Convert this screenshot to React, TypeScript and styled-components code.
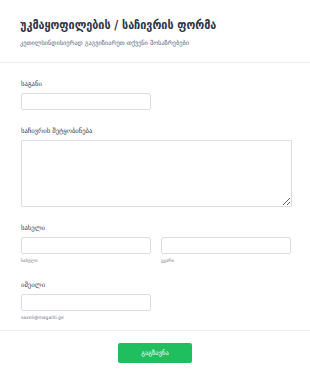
import React from "react";
import styled, { createGlobalStyle } from "styled-components";

const GlobalStyle = createGlobalStyle`
  html, body {
    margin: 0;
    padding: 0;
    background: #ffffff;
  }
  body {
    font-family: "DejaVu Sans", "Noto Sans", sans-serif;
    color: #2c3345;
  }
  * {
    box-sizing: border-box;
  }
`;

const Page = styled.div`
  width: 310px;
  height: 377px;
  background: #ffffff;
  overflow: hidden;
`;

const Header = styled.header`
  padding: 15px 20px 15px;
  border-bottom: 1px solid #ececef;
`;

const Title = styled.h1`
  margin: 0;
  font-family: "DejaVu Sans Condensed", "DejaVu Sans", sans-serif;
  font-size: 12px;
  font-weight: bold;
  line-height: 21px;
  white-space: nowrap;
  color: #2c3345;
`;

const Subtitle = styled.div`
  margin-top: 2px;
  font-size: 6.3px;
  line-height: 9px;
  white-space: nowrap;
  color: #57647e;
`;

const Body = styled.div`
  padding: 16px 20px 9px 21px;
  display: flex;
  flex-direction: column;
  gap: 16px;
`;

const Field = styled.div`
  display: flex;
  flex-direction: column;
`;

const Label = styled.label`
  font-size: 6.6px;
  line-height: 10px;
  color: #2c3345;
  margin-bottom: 4px;
`;

const Row = styled.div`
  display: flex;
  gap: 10px;
`;

const Column = styled.div`
  display: flex;
  flex-direction: column;
`;

const Input = styled.input`
  width: 130px;
  height: 17px;
  margin: 0;
  border: 1px solid #dcdee5;
  border-radius: 2px;
  background: #ffffff;
  padding: 0 4px;
  outline: none;
`;

const TextArea = styled.textarea`
  width: 271px;
  height: 67px;
  border: 1px solid #dcdee5;
  border-radius: 1px;
  background: #ffffff;
  resize: vertical;
  outline: none;
  margin: 0;
  display: block;
`;

const Hint = styled.span`
  margin-top: 3px;
  font-size: 4.5px;
  line-height: 7px;
  color: #6f7689;
`;

const Footer = styled.footer`
  border-top: 1px solid #ececef;
  padding: 12px 0 16px;
  display: flex;
  justify-content: center;
`;

const SubmitButton = styled.button`
  width: 74px;
  height: 20px;
  border: none;
  border-radius: 2px;
  background: #1fbe5e;
  color: #ffffff;
  font-family: "DejaVu Sans", sans-serif;
  font-size: 6.5px;
  cursor: pointer;
`;

export default function App() {
  return (
    <Page>
      <GlobalStyle />
      <Header>
        <Title>უკმაყოფილების / საჩივრის ფორმა</Title>
        <Subtitle>კეთილსინდისიერად გაგვიზიარეთ თქვენი მოსაზრებები</Subtitle>
      </Header>
      <Body>
        <Field>
          <Label>საგანი</Label>
          <Input />
        </Field>
        <Field>
          <Label>საჩივრის შეტყობინება</Label>
          <TextArea />
        </Field>
        <Field>
          <Label>სახელი</Label>
          <Row>
            <Column>
              <Input />
              <Hint>სახელი</Hint>
            </Column>
            <Column>
              <Input />
              <Hint>გვარი</Hint>
            </Column>
          </Row>
        </Field>
        <Field>
          <Label>იმეილი</Label>
          <Input type="email" />
          <Hint>saxeli@magaliti.ge</Hint>
        </Field>
      </Body>
      <Footer>
        <SubmitButton>გაგზავნა</SubmitButton>
      </Footer>
    </Page>
  );
}
